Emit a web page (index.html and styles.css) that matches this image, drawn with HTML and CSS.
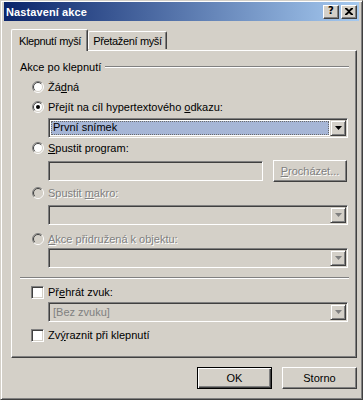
FILE: index.html
```html
<!DOCTYPE html>
<html lang="cs">
<head>
<meta charset="utf-8">
<title>Nastavení akce</title>
<link rel="stylesheet" href="styles.css">
</head>
<body>
<div class="window">
  <div class="titlebar">
    <span class="title">Nastavení akce</span>
    <div class="tbtns">
      <span class="tbtn tq">?</span>
      <span class="tbtn tx"><svg width="8" height="7" viewBox="0 0 8 7"><path d="M0 0h2l2 2 2-2h2v1L5 3.5 8 6v1H6L4 5 2 7H0V6l3-2.5L0 1z" fill="#000"/></svg></span>
    </div>
  </div>
  <div class="content">
    <div class="tabs">
      <div class="tab active"><span>Klepnutí myší</span></div>
      <div class="tab"><span>Přetažení myší</span></div>
    </div>
    <div class="panel">
      <div class="ghead"><span class="glabel">Akce po klepnutí</span><span class="gline"></span></div>

      <div class="row r-zadna"><span class="radio"><svg width="12" height="12" viewBox="0 0 12 12"><circle cx="6" cy="6" r="5" fill="#fff"/><path d="M2.1 9.9A5.5 5.5 0 0 1 9.9 2.1" fill="none" stroke="#808080"/><path d="M9.9 2.1A5.5 5.5 0 0 1 2.1 9.9" fill="none" stroke="#fff"/><path d="M2.8 9.2A4.5 4.5 0 0 1 9.2 2.8" fill="none" stroke="#404040"/><path d="M9.2 2.8A4.5 4.5 0 0 1 2.8 9.2" fill="none" stroke="#d4d0c8"/></svg></span><span class="lbl">Žá<u>d</u>ná</span></div>

      <div class="row r-prejit"><span class="radio"><svg width="12" height="12" viewBox="0 0 12 12"><circle cx="6" cy="6" r="5" fill="#fff"/><path d="M2.1 9.9A5.5 5.5 0 0 1 9.9 2.1" fill="none" stroke="#808080"/><path d="M9.9 2.1A5.5 5.5 0 0 1 2.1 9.9" fill="none" stroke="#fff"/><path d="M2.8 9.2A4.5 4.5 0 0 1 9.2 2.8" fill="none" stroke="#404040"/><path d="M9.2 2.8A4.5 4.5 0 0 1 2.8 9.2" fill="none" stroke="#d4d0c8"/><circle cx="6" cy="6" r="2" fill="#000"/></svg></span><span class="lbl">Přejít na cíl hypertextového <u>o</u>dkazu:</span></div>

      <div class="combo c-prvni"><div class="field"><span class="sel">První snímek</span></div><span class="drop"><svg width="7" height="4" viewBox="0 0 7 4"><path d="M0 0h7L3.5 4z" fill="#000"/></svg></span></div>

      <div class="row r-spustit"><span class="radio"><svg width="12" height="12" viewBox="0 0 12 12"><circle cx="6" cy="6" r="5" fill="#fff"/><path d="M2.1 9.9A5.5 5.5 0 0 1 9.9 2.1" fill="none" stroke="#808080"/><path d="M9.9 2.1A5.5 5.5 0 0 1 2.1 9.9" fill="none" stroke="#fff"/><path d="M2.8 9.2A4.5 4.5 0 0 1 9.2 2.8" fill="none" stroke="#404040"/><path d="M9.2 2.8A4.5 4.5 0 0 1 2.8 9.2" fill="none" stroke="#d4d0c8"/></svg></span><span class="lbl"><u>S</u>pustit program:</span></div>

      <div class="editrow">
        <div class="edit"></div>
        <div class="btn browse"><span class="dis"><u>P</u>rocházet...</span></div>
      </div>

      <div class="row r-makro"><span class="radio"><svg width="12" height="12" viewBox="0 0 12 12"><circle cx="6" cy="6" r="5" fill="#d4d0c8"/><path d="M2.1 9.9A5.5 5.5 0 0 1 9.9 2.1" fill="none" stroke="#808080"/><path d="M9.9 2.1A5.5 5.5 0 0 1 2.1 9.9" fill="none" stroke="#fff"/><path d="M2.8 9.2A4.5 4.5 0 0 1 9.2 2.8" fill="none" stroke="#404040"/><path d="M9.2 2.8A4.5 4.5 0 0 1 2.8 9.2" fill="none" stroke="#d4d0c8"/></svg></span><span class="lbl dis">Spustit <u>m</u>akro:</span></div>

      <div class="combo disabled c-makro"><div class="field"></div><span class="drop"><svg width="7" height="4" viewBox="0 0 7 4"><path d="M0 0h7L3.5 4z" fill="#808080"/></svg></span></div>

      <div class="row r-akce"><span class="radio"><svg width="12" height="12" viewBox="0 0 12 12"><circle cx="6" cy="6" r="5" fill="#d4d0c8"/><path d="M2.1 9.9A5.5 5.5 0 0 1 9.9 2.1" fill="none" stroke="#808080"/><path d="M9.9 2.1A5.5 5.5 0 0 1 2.1 9.9" fill="none" stroke="#fff"/><path d="M2.8 9.2A4.5 4.5 0 0 1 9.2 2.8" fill="none" stroke="#404040"/><path d="M9.2 2.8A4.5 4.5 0 0 1 2.8 9.2" fill="none" stroke="#d4d0c8"/></svg></span><span class="lbl dis"><u>A</u>kce přidružená k objektu:</span></div>

      <div class="combo disabled c-akce"><div class="field"></div><span class="drop"><svg width="7" height="4" viewBox="0 0 7 4"><path d="M0 0h7L3.5 4z" fill="#808080"/></svg></span></div>

      <div class="sep"></div>

      <div class="row r-prehrat"><span class="check"></span><span class="lbl">Př<u>e</u>hrát zvuk:</span></div>

      <div class="combo disabled c-zvuk"><div class="field"><span class="ph">[Bez zvuku]</span></div><span class="drop"><svg width="7" height="4" viewBox="0 0 7 4"><path d="M0 0h7L3.5 4z" fill="#808080"/></svg></span></div>

      <div class="row r-zvyraznit"><span class="check"></span><span class="lbl">Zv<u>ý</u>raznit při klepnutí</span></div>
    </div>
    <div class="buttons">
      <div class="btn default">OK</div>
      <div class="btn">Storno</div>
    </div>
  </div>
</div>
</body>
</html>
```

FILE: styles.css
```css
html, body {
  margin: 0;
  padding: 0;
  background: #d4d0c8;
}
body {
  font-family: "Liberation Sans", Arial, sans-serif;
  font-size: 11px;
  color: #000;
}
.window {
  width: 363px;
  height: 400px;
  box-sizing: border-box;
  border: 1px solid;
  border-color: #d4d0c8 #404040 #404040 #d4d0c8;
  box-shadow: inset 1px 1px #fff, inset -1px -1px #808080;
  padding: 1px 3px 3px 3px;
  background: #d4d0c8;
  display: flex;
  flex-direction: column;
}
.titlebar {
  height: 19px;
  flex: none;
  background: linear-gradient(to right, #0a246a, #a6caf0);
  display: flex;
  align-items: center;
  justify-content: space-between;
  padding: 0 2px 0 2px;
}
.title {
  color: #fff;
  font-weight: bold;
  font-size: 11px;
  letter-spacing: 0.1px;
}
.tbtns {
  display: flex;
  gap: 2px;
}
.tbtn {
  width: 16px;
  height: 14px;
  box-sizing: border-box;
  background: #d4d0c8;
  border: 1px solid;
  border-color: #fff #404040 #404040 #fff;
  box-shadow: inset -1px -1px #808080;
  display: flex;
  align-items: center;
  justify-content: center;
  font-weight: bold;
  font-size: 11px;
  line-height: 1;
}
.tq {
  font-family: "DejaVu Sans", sans-serif;
  font-size: 10px;
  padding-bottom: 1px;
}
.content {
  flex: 1;
  padding: 8px 1px 0 7px;
}
.tabs {
  display: flex;
  height: 21px;
  align-items: flex-end;
  position: relative;
  z-index: 1;
}
.tab {
  width: 79px;
  height: 18px;
  box-sizing: border-box;
  padding: 3px 0 0 0;
  border-left: 1px solid #fff;
  border-top: 1px solid #fff;
  border-right: 1px solid #404040;
  box-shadow: inset -1px 0 #808080;
  border-top-left-radius: 2px;
  border-top-right-radius: 2px;
  line-height: 13px;
  margin-bottom: 1px;
  white-space: nowrap;
  letter-spacing: -0.35px;
  display: flex;
  justify-content: center;
  align-items: flex-start;
}
.tab.active {
  width: 77px;
  height: 22px;
  margin-bottom: -1px;
  padding: 5px 0 0 1px;
  background: #d4d0c8;
}
.panel {
  width: 346px;
  height: 308px;
  box-sizing: border-box;
  border-left: 1px solid #fff;
  border-top: 1px solid #fff;
  border-right: 1px solid #404040;
  border-bottom: 1px solid #404040;
  box-shadow: inset -1px -1px #808080;
  padding: 0 8px 0 20px;
  display: flex;
  flex-direction: column;
}
.ghead {
  margin: 9px 0 0 -12px;
  height: 14px;
  display: flex;
  align-items: center;
}
.glabel {
  padding-right: 4px;
}
.gline {
  flex: 1;
  height: 0;
  border-top: 1px solid #808080;
  border-bottom: 1px solid #fff;
  margin-right: -1px;
}
.row {
  height: 14px;
  display: flex;
  align-items: center;
}
.radio {
  width: 12px;
  height: 12px;
  display: block;
  margin-right: 4px;
  flex: none;
}
.radio svg {
  display: block;
}
.check {
  width: 13px;
  height: 13px;
  box-sizing: border-box;
  margin-left: -1px;
  margin-right: 4px;
  flex: none;
  background: #fff;
  border: 1px solid;
  border-color: #808080 #fff #fff #808080;
  box-shadow: inset 1px 1px #404040, inset -1px -1px #d4d0c8;
}
.lbl {
  white-space: nowrap;
}
.dis {
  color: #808080;
  text-shadow: 1px 1px 0 #fff;
}
u {
  text-decoration-thickness: 1px;
  text-underline-offset: 1px;
}
.r-zadna { margin-top: 6px; }
.r-prejit { margin-top: 6px; }
.c-prvni { margin-top: 4px; }
.r-spustit { margin-top: 3px; }
.editrow { margin-top: 5px; }
.r-makro { margin-top: 4px; }
.c-makro { margin-top: 5px; }
.r-akce { margin-top: 7px; }
.c-akce { margin-top: 2px; }
.sep { margin-top: 9px; }
.r-prehrat { margin-top: 6px; }
.c-zvuk { margin-top: 3px; }
.r-zvyraznit { margin-top: 6px; }

.combo {
  margin-left: 16px;
  height: 20px;
  box-sizing: border-box;
  border: 1px solid;
  border-color: #808080 #fff #fff #808080;
  box-shadow: inset 1px 1px #404040, inset -1px -1px #d4d0c8;
  background: #fff;
  padding: 2px 2px 2px 2px;
  display: flex;
}
.combo.disabled {
  background: #d4d0c8;
}
.field {
  flex: 1;
  display: flex;
  align-items: center;
  padding-right: 1px;
}
.sel {
  flex: 1;
  height: 14px;
  box-sizing: border-box;
  background: #a6b6d6;
  outline: 1px dotted #6a6a6a;
  outline-offset: -1px;
  line-height: 13px;
  padding-left: 2px;
}
.ph {
  color: #808080;
  padding-left: 2px;
}
.drop {
  width: 16px;
  height: 16px;
  margin-top: -1px;
  margin-right: -1px;
  box-sizing: border-box;
  background: #d4d0c8;
  border: 1px solid;
  border-color: #d4d0c8 #404040 #404040 #d4d0c8;
  box-shadow: inset 1px 1px #fff, inset -1px -1px #808080;
  display: flex;
  align-items: center;
  justify-content: center;
}
.drop svg {
  display: block;
}
.editrow {
  margin-left: 16px;
  height: 22px;
  display: flex;
  align-items: center;
  gap: 10px;
}
.edit {
  width: 215px;
  height: 20px;
  box-sizing: border-box;
  border: 1px solid;
  border-color: #808080 #fff #fff #808080;
  box-shadow: inset 1px 1px #404040, inset -1px -1px #d4d0c8;
  background: #d4d0c8;
}
.btn {
  width: 75px;
  height: 22px;
  box-sizing: border-box;
  background: #d4d0c8;
  border: 1px solid;
  border-color: #fff #404040 #404040 #fff;
  box-shadow: inset -1px -1px #808080;
  display: flex;
  align-items: center;
  justify-content: center;
}
.browse {
  width: 74px;
}
.sep {
  margin-left: -12px;
  margin-right: -1px;
  border-top: 1px solid #808080;
  border-bottom: 1px solid #fff;
}
.buttons {
  margin-top: 9px;
  display: flex;
  justify-content: flex-end;
  gap: 10px;
  width: 346px;
}
.btn.default {
  border: 1px solid #000;
  box-shadow: inset 1px 1px #fff, inset -1px -1px #404040, inset -2px -2px #808080;
}
```
